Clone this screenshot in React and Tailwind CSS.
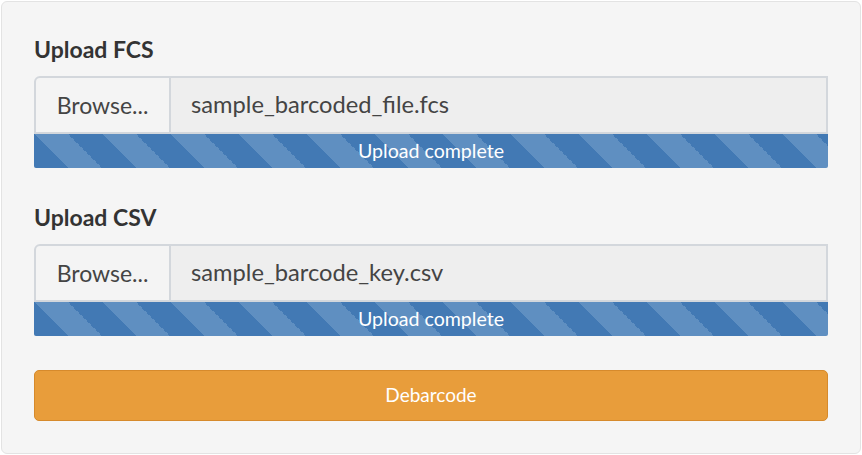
import React from "react";

const stripes =
  "bg-[#4279b4] bg-[linear-gradient(45deg,#5f8fc1_25%,transparent_25%,transparent_50%,#5f8fc1_50%,#5f8fc1_75%,transparent_75%,transparent)] bg-[length:68px_68px]";

const FileUpload = ({ label, fileName }) => (
  <div className="flex flex-col">
    <div className="h-[34px] leading-[34px] text-[23px] font-bold text-[#333]">{label}</div>
    <div className="mt-[10px] flex h-[58px]">
      <div className="flex w-[137px] items-center justify-center rounded-tl-[6px] border-2 border-[#d3d7dc] bg-[#f4f4f4] text-[23px] text-[#444]">
        Browse...
      </div>
      <div className="flex flex-1 items-center border-2 border-l-0 border-[#d3d7dc] bg-[#eeeeee] pl-[20px] text-[23.7px] text-[#444]">
        {fileName}
      </div>
    </div>
    <div className={`flex h-[34px] items-center justify-center rounded-b-[2px] text-[19.6px] text-white ${stripes}`}>
      Upload complete
    </div>
  </div>
);

export default function App() {
  return (
    <div className="h-[455px] w-[862px] bg-white p-px font-['Lato',sans-serif]">
      <div className="flex h-[453px] w-[860px] flex-col rounded-[6px] border border-[#e3e3e3] bg-[#f5f5f5] pb-[32px] pl-[32px] pr-[32px] pt-[30px]">
        <FileUpload label="Upload FCS" fileName="sample_barcoded_file.fcs" />
        <div className="mt-[32px]">
          <FileUpload label="Upload CSV" fileName="sample_barcode_key.csv" />
        </div>
        <button className="mt-[34px] flex h-[51px] items-center justify-center rounded-[5px] border border-[#d68a2c] bg-[#e89d3b] text-[19px] text-white">
          Debarcode
        </button>
      </div>
    </div>
  );
}
